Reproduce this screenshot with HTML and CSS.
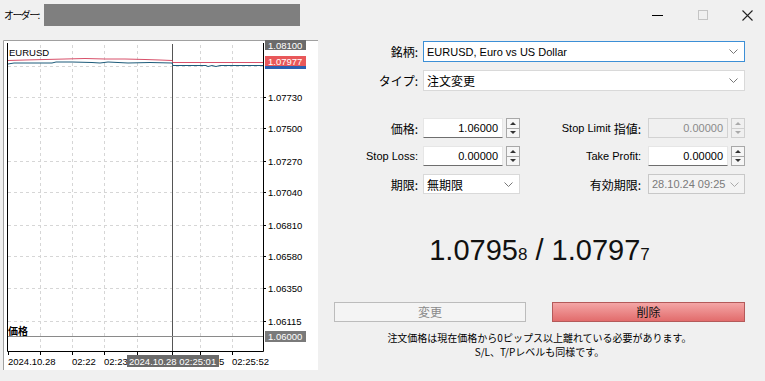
FILE: index.html
```html
<!DOCTYPE html>
<html lang="ja">
<head>
<meta charset="utf-8">
<title>オーダー</title>
<link rel="stylesheet" href="styles.css">
</head>
<body>
<div class="titlebar">
  <span class="title">オーダー:</span>
  <div class="title-field"></div>
  <div class="caption">
    <svg class="cap-min" width="11" height="11" viewBox="0 0 11 11"><path d="M0 5.5H11" stroke="#000" stroke-width="1"/></svg>
    <svg class="cap-max" width="10" height="10" viewBox="0 0 10 10"><rect x="0.5" y="0.5" width="9" height="9" fill="none" stroke="#c4c4c4"/></svg>
    <svg class="cap-close" width="11" height="11" viewBox="0 0 11 11"><path d="M0.5 0.5L10.5 10.5M10.5 0.5L0.5 10.5" stroke="#222" stroke-width="1.1"/></svg>
  </div>
</div>

<div class="main">
  <div class="chart">
    <svg width="315" height="330" viewBox="3 40 315 330" font-family="Liberation Sans, Arial, sans-serif" font-size="9.5">
      <rect x="3" y="40" width="315" height="330" fill="#fff"/>
      <path d="M3.5 370V40.5H318" stroke="#a0a0a0" fill="none"/>
      <g stroke="#d6d6d6" stroke-dasharray="3 3" fill="none">
        <path d="M8 66.5H263M8 97.5H263M8 128.5H263M8 161.5H263M8 192.5H263M8 225.5H263M8 256.5H263M8 288.5H263M8 321.5H263"/>
        <path d="M40.5 45V351M72.5 45V351M104.5 45V351M137.5 45V351M200.5 45V351M232.5 45V351"/>
      </g>
      <path d="M172.5 44V351" stroke="#555"/>
      <path d="M8 336.5H263" stroke="#8a8a8a"/>
      <path d="M7.5 43V351.5H263.5V43" stroke="#000" fill="none"/>
      <g stroke="#000">
        <path d="M263 97.5h3M263 128.5h3M263 161.5h3M263 192.5h3M263 225.5h3M263 256.5h3M263 288.5h3M263 321.5h3"/>
        <path d="M8.5 352v3M40.5 352v3M72.5 352v3M104.5 352v3M137.5 352v3M172.5 352v3M200.5 352v3M232.5 352v3"/>
      </g>
      <polyline fill="none" stroke="#d8506a" stroke-width="1" points="8,60.5 25,60 45,59.5 65,59 85,58.5 105,59 125,59 145,59.5 160,60 172,60.5 173,62.5 263,62.5"/>
      <polyline fill="none" stroke="#1d5b7a" stroke-width="1" points="8,64 14,63 35,63 52,63 56,62 72,62 92,62.5 100,63 108,62 128,63 150,62.5 172,63 173,65.5 206,65.5 208,66.5 212,65.5 216,66.5 220,65.5 263,65.5"/>
      <text x="9" y="55.5" fill="#000">EURUSD</text>

      <rect x="265" y="40" width="41" height="10" fill="#6b6b6b"/>
      <text x="268" y="48.5" fill="#fff">1.08100</text>
      <rect x="265" y="56" width="41" height="13" fill="#2b5fb0"/>
      <rect x="265" y="56" width="41" height="10" fill="#e8585a"/>
      <text x="268" y="64.5" fill="#fff">1.07977</text>

      <g fill="#000">
        <text x="268" y="101">1.07730</text>
        <text x="268" y="132">1.07500</text>
        <text x="268" y="165">1.07270</text>
        <text x="268" y="196">1.07040</text>
        <text x="268" y="229">1.06810</text>
        <text x="268" y="260">1.06580</text>
        <text x="268" y="292">1.06350</text>
        <text x="268" y="325">1.06115</text>
      </g>
      <rect x="265" y="331" width="41" height="11" fill="#7a7a7a"/>
      <text x="268" y="340" fill="#fff">1.06000</text>

      <text x="8" y="334.5" font-family="Noto Sans CJK JP, sans-serif" font-size="10" font-weight="bold" fill="#000">価格</text>

      <g fill="#000">
        <text x="8" y="364.5">2024.10.28</text>
        <text x="72" y="364.5">02:22</text>
        <text x="104" y="364.5">02:23</text>
        <text x="219" y="364.5">5</text>
        <text x="232" y="364.5">02:25:52</text>
      </g>
      <rect x="127" y="355" width="92" height="12" fill="#6b6b6b"/>
      <text x="129" y="364.5" fill="#fff">2024.10.28 02:25:01</text>
    </svg>
  </div>

  <div class="form">
    <div class="grid grid-top">
      <label class="lbl jp">銘柄:</label>
      <div class="select wide focus"><span>EURUSD, Euro vs US Dollar</span><svg class="chev" width="9" height="5" viewBox="0 0 9 5"><path d="M0.5 0.5L4.5 4.5L8.5 0.5" fill="none" stroke="#777"/></svg></div>
      <label class="lbl jp">タイプ:</label>
      <div class="select wide"><span class="jp">注文変更</span><svg class="chev" width="9" height="5" viewBox="0 0 9 5"><path d="M0.5 0.5L4.5 4.5L8.5 0.5" fill="none" stroke="#777"/></svg></div>
    </div>

    <div class="grid grid-mid">
      <label class="lbl jp">価格:</label>
      <div class="spin">
        <div class="edit">1.06000</div>
        <div class="spinbtn"><span class="up"></span><span class="down"></span></div>
      </div>
      <label class="lbl lbl-right">Stop Limit <span class="jp">指値:</span></label>
      <div class="spin disabled">
        <div class="edit">0.00000</div>
        <div class="spinbtn"><span class="up"></span><span class="down"></span></div>
      </div>

      <label class="lbl">Stop Loss:</label>
      <div class="spin">
        <div class="edit">0.00000</div>
        <div class="spinbtn"><span class="up"></span><span class="down"></span></div>
      </div>
      <label class="lbl lbl-right">Take Profit:</label>
      <div class="spin">
        <div class="edit">0.00000</div>
        <div class="spinbtn"><span class="up"></span><span class="down"></span></div>
      </div>

      <label class="lbl jp">期限:</label>
      <div class="select"><span class="jp">無期限</span><svg class="chev" width="9" height="5" viewBox="0 0 9 5"><path d="M0.5 0.5L4.5 4.5L8.5 0.5" fill="none" stroke="#777"/></svg></div>
      <label class="lbl lbl-right jp">有効期限:</label>
      <div class="select disabled"><span>28.10.24 09:25</span><svg class="chev" width="9" height="5" viewBox="0 0 9 5"><path d="M0.5 0.5L4.5 4.5L8.5 0.5" fill="none" stroke="#aaa"/></svg></div>
    </div>

    <div class="quote">1.0795<span class="pip">8</span> / 1.0797<span class="pip">7</span></div>

    <div class="buttons">
      <button class="btn btn-disabled">変更</button>
      <button class="btn btn-danger">削除</button>
    </div>

    <p class="note">注文価格は現在価格から0ピップス以上離れている必要があります。<br>S/L、T/Pレベルも同様です。</p>
  </div>
</div>
</body>
</html>
```

FILE: styles.css
```css
* { box-sizing: border-box; }

body {
  margin: 0;
  width: 765px;
  height: 381px;
  overflow: hidden;
  background: #f0f0f0;
  color: #000;
  font-family: "Liberation Sans", "Noto Sans CJK JP", sans-serif;
  font-size: 11px;
}

.jp {
  font-family: "Noto Sans CJK JP", sans-serif;
  font-size: 12px;
}

/* title bar */
.titlebar {
  display: flex;
  align-items: center;
  height: 30px;
  padding-left: 4px;
}
.title {
  flex: 0 0 40px;
  white-space: nowrap;
  font-family: "Noto Sans CJK JP", sans-serif;
  font-size: 10px;
  letter-spacing: -1.6px;
  line-height: 14px;
}
.title-field {
  width: 256px;
  height: 22px;
  background: #7f7f7f;
}
.caption {
  margin-left: auto;
  padding-right: 12px;
  display: flex;
  align-items: center;
}
.cap-min { margin-right: 35px; }
.cap-max { margin-right: 34px; }

/* main */
.main {
  display: flex;
  align-items: flex-start;
  margin-top: 10px;
  padding-left: 3px;
}
.chart {
  width: 315px;
  height: 330px;
}
.chart svg { display: block; }

.form {
  margin-left: 16px;
  width: 411px;
  padding-top: 1px;
  display: flex;
  flex-direction: column;
}

.grid {
  display: grid;
  grid-template-columns: 86px 97px 122px 97px;
  column-gap: 3px;
  row-gap: 8px;
}
.grid-top { grid-auto-rows: 21px; }
.grid-mid {
  grid-auto-rows: 20px;
  margin-top: 27px;
}

.lbl {
  display: flex;
  align-items: center;
  justify-content: flex-end;
  white-space: nowrap;
  padding-right: 2px;
}
.lbl-right { padding-right: 4px; }
.lbl .jp { margin-left: 3px; }

.select {
  display: flex;
  align-items: center;
  justify-content: space-between;
  background: #fff;
  border: 1px solid #d9d9d9;
  padding: 0 6px 0 3px;
  white-space: nowrap;
}
.select.wide { grid-column: 2 / 5; }
.select.focus { border-color: #3c8fd6; }
.select.disabled {
  background: #f3f3f3;
  border-color: #c8c8c8;
  color: #7a7a7a;
  padding-right: 5px;
}

.spin {
  display: flex;
  justify-content: space-between;
}
.edit {
  width: 80px;
  display: flex;
  align-items: center;
  justify-content: flex-end;
  padding-right: 4px;
  background: #fff;
  border: 1px solid;
  border-color: #e6e6e6 #e6e6e6 #6e6e6e #e6e6e6;
}
.spinbtn {
  width: 14px;
  display: flex;
  flex-direction: column;
  border: 1px solid #a8a8a8;
  background: #f6f6f6;
}
.spinbtn span {
  flex: 1;
  display: flex;
  align-items: center;
  justify-content: center;
}
.spinbtn .up { border-bottom: 1px solid #a8a8a8; }
.spinbtn .up::before {
  content: "";
  border-left: 3px solid transparent;
  border-right: 3px solid transparent;
  border-bottom: 3px solid #333;
}
.spinbtn .down::before {
  content: "";
  border-left: 3px solid transparent;
  border-right: 3px solid transparent;
  border-top: 3px solid #333;
}
.spin.disabled .edit {
  background: #f0f0f0;
  border-color: #d2d2d2;
  color: #8a8a8a;
}
.spin.disabled .spinbtn { border-color: #cfcfcf; background: #f0f0f0; }
.spin.disabled .spinbtn .up { border-bottom-color: #cfcfcf; }
.spin.disabled .spinbtn .up::before { border-bottom-color: #aaa; }
.spin.disabled .spinbtn .down::before { border-top-color: #aaa; }

.quote {
  margin-top: 39px;
  text-align: center;
  font-family: "Liberation Sans", Arial, sans-serif;
  font-size: 29px;
  line-height: 34px;
  color: #111;
}
.pip { font-size: 17px; }

.buttons {
  margin-top: 30px;
  display: flex;
  justify-content: space-between;
}
.btn {
  height: 20px;
  padding: 0;
  font-family: "Noto Sans CJK JP", sans-serif;
  font-size: 12px;
  line-height: 16px;
}
.btn-disabled {
  width: 192px;
  background: #f4f4f4;
  border: 1px solid #bcbcbc;
  color: #8a8a8a;
}
.btn-danger {
  width: 193px;
  background: linear-gradient(#f4a6a6, #e26c6c);
  border: 1px solid #b45a5a;
  color: #111;
}

.note {
  margin: 9px 0 0;
  text-align: center;
  font-family: "Noto Sans CJK JP", sans-serif;
  font-size: 10px;
  line-height: 14px;
}
```
